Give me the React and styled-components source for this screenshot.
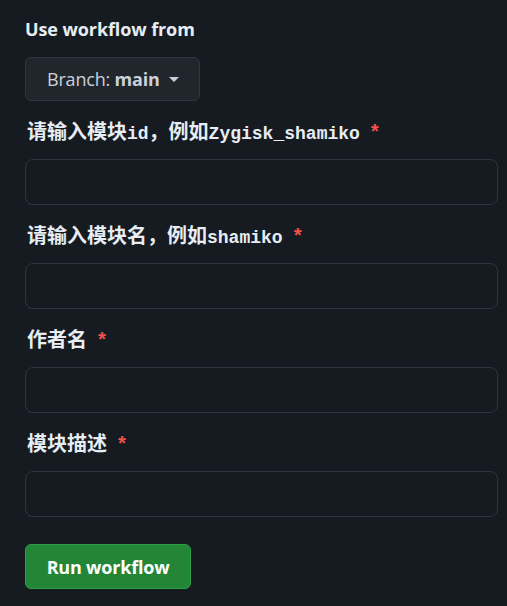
import React from 'react'
import styled, { createGlobalStyle } from 'styled-components'

const GlobalStyle = createGlobalStyle`
    html, body {
        margin: 0;
        padding: 0;
        background: #161b22;
    }
`

const Wrapper = styled.div`
    display: flex;
    flex-direction: column;
    align-items: flex-start;
    padding: 17px 9px 17px 25px;
    min-height: 606px;
    box-sizing: border-box;
    background: #161b22;
    font-family: 'Open Sans', 'Liberation Sans', sans-serif;
    color: #e6edf3;
`

const Title = styled.div`
    font-size: 18px;
    font-weight: 700;
    line-height: 24px;
    letter-spacing: -0.1px;
    color: #e6edf3;
`

const BranchButton = styled.button`
    display: flex;
    align-items: center;
    gap: 9px;
    margin-top: 16px;
    height: 44px;
    width: 175px;
    padding: 0 0 0 21px;
    box-sizing: border-box;
    background: #21262d;
    border: 1px solid #30363d;
    border-radius: 6px;
    color: #c9d1d9;
    font-family: 'Open Sans', 'Liberation Sans', sans-serif;
    font-size: 18px;
    letter-spacing: -0.2px;
    cursor: pointer;

    b {
        font-weight: 700;
    }
`

const Caret = styled.span`
    width: 0;
    height: 0;
    border-left: 5px solid transparent;
    border-right: 5px solid transparent;
    border-top: 5px solid #c9d1d9;
    margin-top: 1px;
`

const Fields = styled.div`
    display: flex;
    flex-direction: column;
    gap: 21px;
    width: 100%;
    margin-top: 21px;
`

const Field = styled.div`
    display: flex;
    flex-direction: column;
    gap: 13px;
`

const Label = styled.label`
    font-family: 'Liberation Mono', 'Noto Sans CJK SC', monospace;
    font-size: 20px;
    font-weight: 700;
    line-height: 24px;
    color: #e6edf3;
    padding-left: 2px;
`

const Code = styled.span`
    font-size: 18px;
`

const Required = styled.span`
    color: #f85149;
    margin-left: 9px;
`

const Input = styled.input`
    height: 46px;
    width: 100%;
    box-sizing: border-box;
    background: #161b22;
    border: 1px solid #30363d;
    border-radius: 8px;
    color: #e6edf3;
    padding: 0 12px;
    font-size: 16px;
    outline: none;
`

const RunButton = styled.button`
    margin-top: 27px;
    height: 45px;
    width: 166px;
    background: #238636;
    border: 1px solid #2ea043;
    border-radius: 6px;
    color: #ffffff;
    font-family: 'Open Sans', 'Liberation Sans', sans-serif;
    font-size: 18px;
    font-weight: 700;
    letter-spacing: -0.2px;
    cursor: pointer;
`

const fields = [
    { id: 'id', parts: ['请输入模块', 'id', '，例如', 'Zygisk_shamiko'] },
    { id: 'name', parts: ['请输入模块名，例如', 'shamiko'] },
    { id: 'author', parts: ['作者名'] },
    { id: 'desc', parts: ['模块描述'] },
]

function App() {
    return (
        <Wrapper>
            <GlobalStyle />
            <Title>Use workflow from</Title>
            <BranchButton>
                <span>
                    Branch: <b>main</b>
                </span>
                <Caret />
            </BranchButton>

            <Fields>
                {fields.map(f => (
                    <Field key={f.id}>
                        <Label htmlFor={f.id}>
                            {f.parts.map((p, i) =>
                                /[a-zA-Z_]/.test(p) ? <Code key={i}>{p}</Code> : <span key={i}>{p}</span>
                            )}
                            <Required>*</Required>
                        </Label>
                        <Input id={f.id} type="text" />
                    </Field>
                ))}
            </Fields>

            <RunButton>Run workflow</RunButton>
        </Wrapper>
    )
}

export default App
